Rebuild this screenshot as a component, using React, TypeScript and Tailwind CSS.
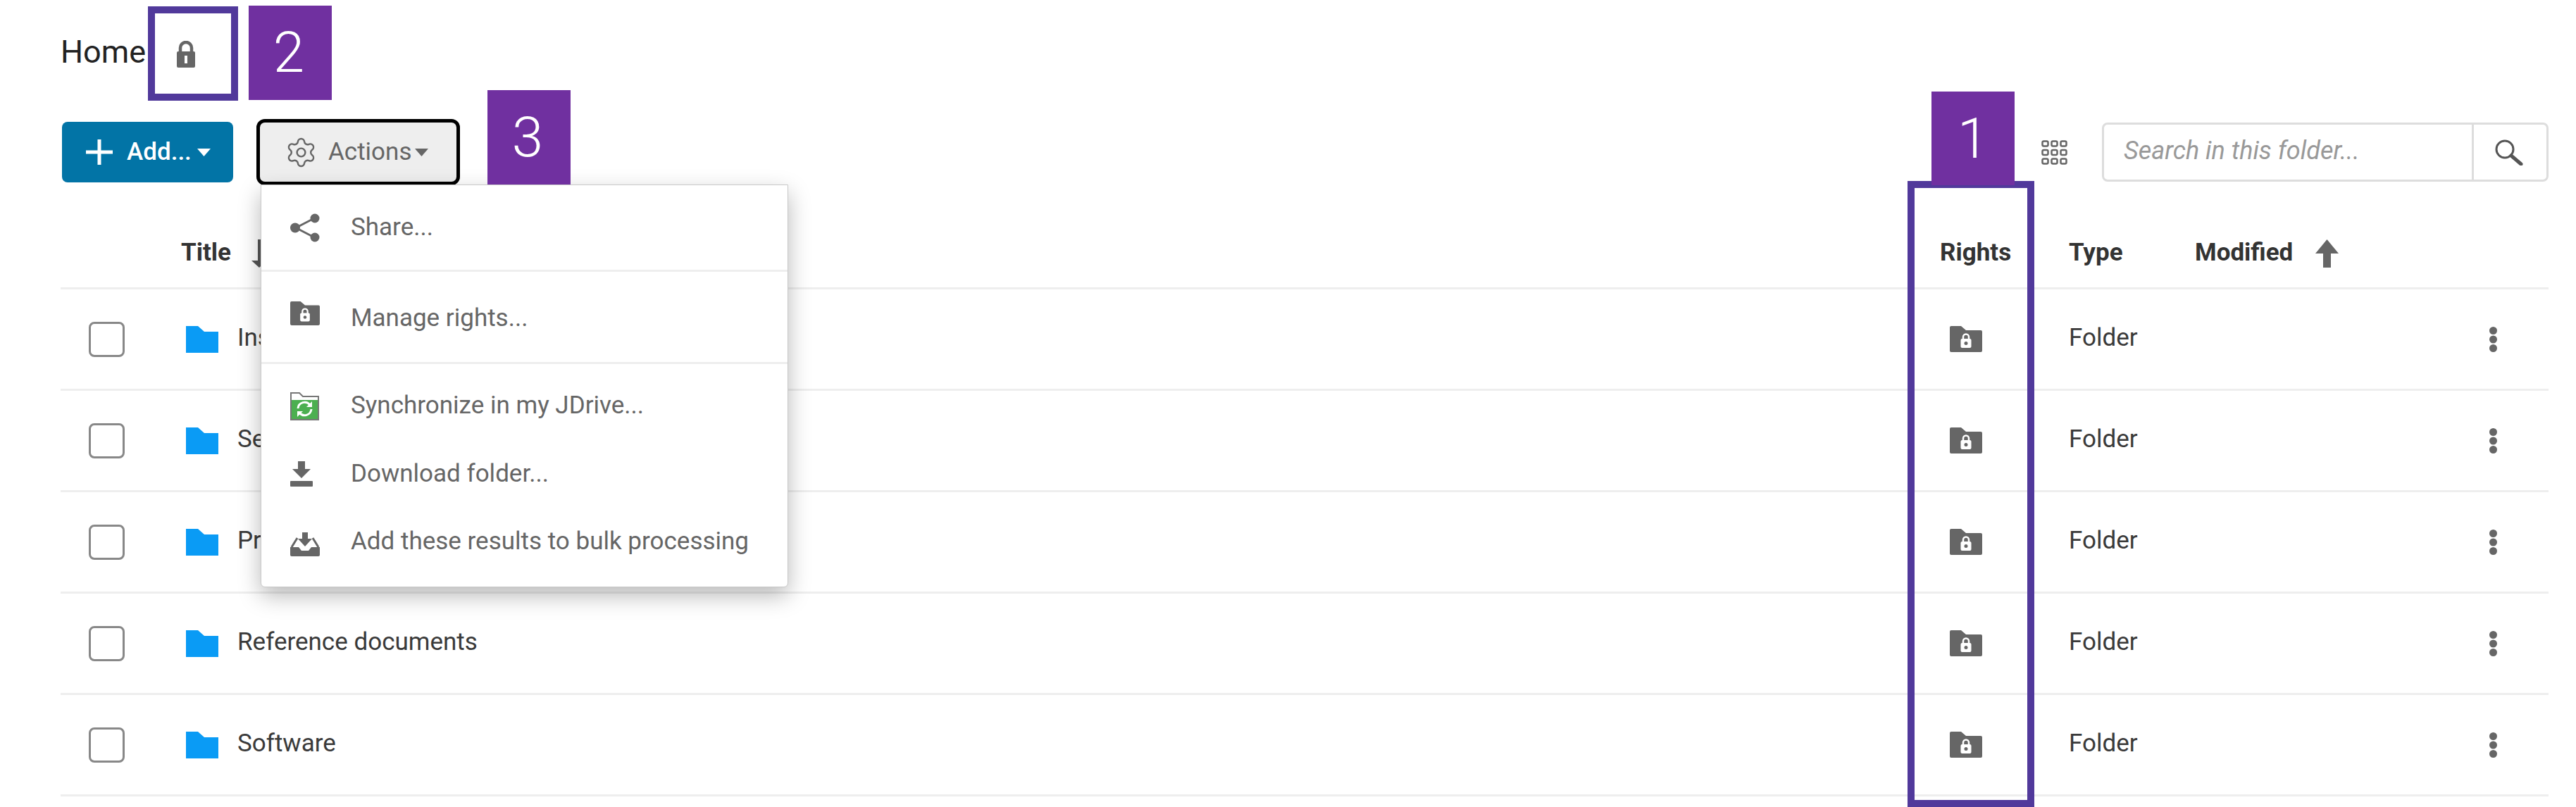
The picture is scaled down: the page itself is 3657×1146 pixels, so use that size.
import React from 'react';
import { Settings } from 'lucide-react';

const rows = ['Instructions', 'Services', 'Projects', 'Reference documents', 'Software'];

const Caret = ({ className }: { className: string }) => (
  <svg viewBox="0 0 19 11" className={className} fill="currentColor">
    <polygon points="0,0 19,0 9.5,11" />
  </svg>
);

const PadLock = ({ className }: { className: string }) => (
  <svg viewBox="0 0 28 38" className={className}>
    <path d="M6 16V10a8 8 0 0 1 16 0v6" fill="none" stroke="#666" strokeWidth="4.5" />
    <rect x="1" y="15" width="26" height="23" rx="2" fill="#666" />
    <rect x="12" y="21" width="4" height="11" fill="#fff" />
  </svg>
);

const LockFolder = ({ className }: { className: string }) => (
  <svg viewBox="0 0 46 37" className={className}>
    <path d="M0 2a2 2 0 0 1 2-2h14l7 6h21a2 2 0 0 1 2 2v27a2 2 0 0 1-2 2H2a2 2 0 0 1-2-2z" fill="#666" />
    <path d="M19 19v-3.500a4 4 0 0 1 8 0V19" fill="none" stroke="#fff" strokeWidth="2.500" />
    <rect x="15.500" y="18" width="15" height="13" rx="2" fill="#fff" />
    <circle cx="23" cy="24.500" r="2.500" fill="#666" />
  </svg>
);

const BlueFolder = () => (
  <svg viewBox="0 0 46 38" className="w-[46px] h-[38px]">
    <path d="M0 0h17l9 8h20v30H0z" fill="#0a9bf5" />
  </svg>
);

const Kebab = () => (
  <svg viewBox="0 0 13 36" className="w-[13px] h-[36px]" fill="#666">
    <circle cx="6.500" cy="5.500" r="5.500" />
    <circle cx="6.500" cy="18" r="5.500" />
    <circle cx="6.500" cy="30.500" r="5.500" />
  </svg>
);

const ShareIcon = () => (
  <svg viewBox="0 0 43 41" className="w-[43px] h-[41px]">
    <path d="M8 20.500 34 7M8 20.500 34 34" stroke="#666" strokeWidth="3" fill="none" />
    <circle cx="7" cy="20.500" r="7" fill="#666" />
    <circle cx="35" cy="7" r="6.500" fill="#666" />
    <circle cx="35" cy="34" r="6.500" fill="#666" />
  </svg>
);

const SyncIcon = () => (
  <svg viewBox="0 0 41 41" className="w-[41px] h-[41px]">
    <path d="M1 40V2h12l5 5h22v33z" fill="#fff" stroke="#777" strokeWidth="2" />
    <rect x="2" y="12" width="37" height="27" fill="#4caf50" />
    <path d="M11 24a9.500 9.500 0 0 1 17-5" fill="none" stroke="#fff" strokeWidth="3" />
    <path d="M30 28a9.500 9.500 0 0 1-17 5" fill="none" stroke="#fff" strokeWidth="3" transform="translate(0 -3)" />
    <path d="M31 14v8h-8z" fill="#fff" />
    <path d="M10 36v-8h8z" fill="#fff" />
  </svg>
);

const DownloadIcon = () => (
  <svg viewBox="0 0 32 36" className="w-[32px] h-[36px]" fill="#666">
    <path d="M11 0h10v11h8L16 24 3 11h8z" />
    <rect x="0" y="28" width="32" height="8" rx="1" />
  </svg>
);

const BulkIcon = () => (
  <svg viewBox="0 0 42 34" className="w-[42px] h-[34px]">
    <path d="M17 0h8v9h6L21 20 11 9h6z" fill="#666" />
    <path d="M10 8 2 21M32 8l8 13" stroke="#666" strokeWidth="3" fill="none" />
    <path d="M0 21h12l4 5h10l4-5h12v11a2 2 0 0 1-2 2H2a2 2 0 0 1-2-2z" fill="#666" />
  </svg>
);

const GridIcon = () => (
  <svg viewBox="0 0 37 35" className="w-[37px] h-[35px]" fill="none" stroke="#666" strokeWidth="2.500">
    {[1.500, 14.500, 27.500].map((x) =>
      [1.500, 14, 26.500].map((y) => <rect key={`${x}-${y}`} x={x} y={y} width="8" height="7" rx="2" />)
    )}
  </svg>
);

const SearchIcon = () => (
  <svg viewBox="0 0 41 37" className="w-[41px] h-[37px]" fill="none" stroke="#555">
    <circle cx="15" cy="14" r="12" strokeWidth="3" />
    <path d="M24 23l14 12" strokeWidth="5" strokeLinecap="round" />
  </svg>
);

const Badge = ({ className, children }: { className: string; children: string }) => (
  <div className={`absolute w-[118px] flex items-center justify-center bg-[#7030a0] text-white font-light text-[80px] ${className}`}>
    {children}
  </div>
);

const MenuItem = ({ icon, label, className }: { icon: React.ReactNode; label: string; className: string }) => (
  <div className={`flex items-center ${className}`}>
    <div className="w-[127px] pl-[41px] shrink-0 flex items-center">{icon}</div>
    <span>{label}</span>
  </div>
);

export default function App() {
  return (
    <div className="relative w-[3657px] h-[1146px] overflow-hidden bg-white font-[family-name:Roboto,sans-serif] text-[#3a3a3a] text-[35px]">
      <div className="pl-[86px] pr-[39px]">
        {/* breadcrumb */}
        <div className="h-[173px] pb-[26px] flex items-center gap-[43px]">
          <span className="text-[45px] leading-none text-[#222]">Home</span>
          <PadLock className="w-[28px] h-[38px] mt-[6px]" />
        </div>

        {/* toolbar */}
        <div className="h-[86px] flex items-center">
          <button className="ml-[2px] w-[243px] h-[86px] rounded-lg bg-[#0274a6] text-white font-medium flex items-center pl-[34px]">
            <svg viewBox="0 0 38 36" className="w-[38px] h-[36px]" fill="#fff">
              <rect x="0" y="15.500" width="38" height="5" />
              <rect x="16.500" y="0" width="5" height="36" />
            </svg>
            <span className="ml-[20px]">Add...</span>
            <Caret className="w-[19px] h-[11px] ml-[8px] text-white" />
          </button>
          <button className="ml-[33px] w-[289px] h-[94px] rounded-xl border-[5px] border-black bg-[#eee] text-[#666] flex items-center pl-[35px]">
            <Settings className="w-[47px] h-[47px] text-[#666]" strokeWidth={1.25} />
            <span className="ml-[15px]">Actions</span>
            <Caret className="w-[19px] h-[11px] ml-[5px] text-[#666]" />
          </button>
          <div className="ml-auto mr-[49px]">
            <GridIcon />
          </div>
          <div className="w-[634px] h-[84px] rounded-lg border-[3px] border-[#ddd] flex items-center">
            <span className="flex-1 pl-[28px] pb-[4px] italic text-[#999] text-[36px]">Search in this folder...</span>
            <div className="w-[106px] h-full border-l-[3px] border-[#ddd] flex items-center pl-[29px]">
              <SearchIcon />
            </div>
          </div>
        </div>

        {/* table header */}
        <div className="h-[152px] pt-[52px] border-b-[3px] border-[#eee] flex items-center font-bold text-[#333]">
          <div className="w-[171px]" />
          <div className="flex-1 flex items-center gap-[25px]">
            <span>Title</span>
            <svg viewBox="0 0 30 40" className="w-[30px] h-[40px]" fill="#555">
              <path d="M13 0h4v30h9L15 40 4 30h9z" />
            </svg>
          </div>
          <div className="w-[183px]">Rights</div>
          <div className="w-[179px]">Type</div>
          <div className="w-[502px] flex items-center gap-[32px]">
            <span>Modified</span>
            <svg viewBox="0 0 33 40" className="w-[33px] h-[40px]" fill="#666">
              <path d="M16.500 0 33 20H22v20H11V20H0z" />
            </svg>
          </div>
        </div>

        {/* folder rows */}
        {rows.map((name) => (
          <div key={name} className="h-[144px] border-b-[3px] border-[#eee] flex items-center">
            <div className="w-[178px] pl-[40px]">
              <div className="w-[51px] h-[50px] rounded-lg border-[3px] border-[#888] bg-white" />
            </div>
            <div className="w-[73px]">
              <BlueFolder />
            </div>
            <div className="flex-1 pb-[3px]">{name}</div>
            <div className="w-[169px]">
              <LockFolder className="w-[46px] h-[37px]" />
            </div>
            <div className="w-[596px] pb-[3px]">Folder</div>
            <div className="w-[85px]">
              <Kebab />
            </div>
          </div>
        ))}
      </div>

      {/* open Actions menu */}
      <div className="absolute left-[370px] top-[262px] w-[749px] h-[572px] rounded-b-md border border-[#c8c8c8] bg-white text-[#666] shadow-[0_12px_32px_rgba(0,0,0,0.28)]">
        <MenuItem icon={<ShareIcon />} label="Share..." className="h-[123px] border-b-[3px] border-[#eee]" />
        <MenuItem
          icon={<div className="mb-[14px]"><LockFolder className="w-[42px] h-[34px]" /></div>}
          label="Manage rights..."
          className="h-[131px] pt-[4px] border-b-[3px] border-[#eee]"
        />
        <MenuItem icon={<SyncIcon />} label="Synchronize in my JDrive..." className="h-[119px]" />
        <MenuItem icon={<DownloadIcon />} label="Download folder..." className="h-[96px] -mt-[11px]" />
        <MenuItem
          icon={<div className="mt-[8px]"><BulkIcon /></div>}
          label="Add these results to bulk processing"
          className="h-[96px]"
        />
      </div>

      {/* annotation overlays */}
      <div className="absolute left-[210px] top-[9px] w-[128px] h-[134px] border-[10px] border-[#51399b]" />
      <Badge className="left-[353px] top-[8px] h-[134px] pr-[4px]">2</Badge>
      <Badge className="left-[692px] top-[128px] h-[134px] pr-[4px]">3</Badge>
      <div className="absolute left-[2708px] top-[257px] w-[180px] h-[889px] border-[10px] border-[#51399b]" />
      <Badge className="left-[2742px] top-[130px] h-[133px]">1</Badge>
    </div>
  );
}
